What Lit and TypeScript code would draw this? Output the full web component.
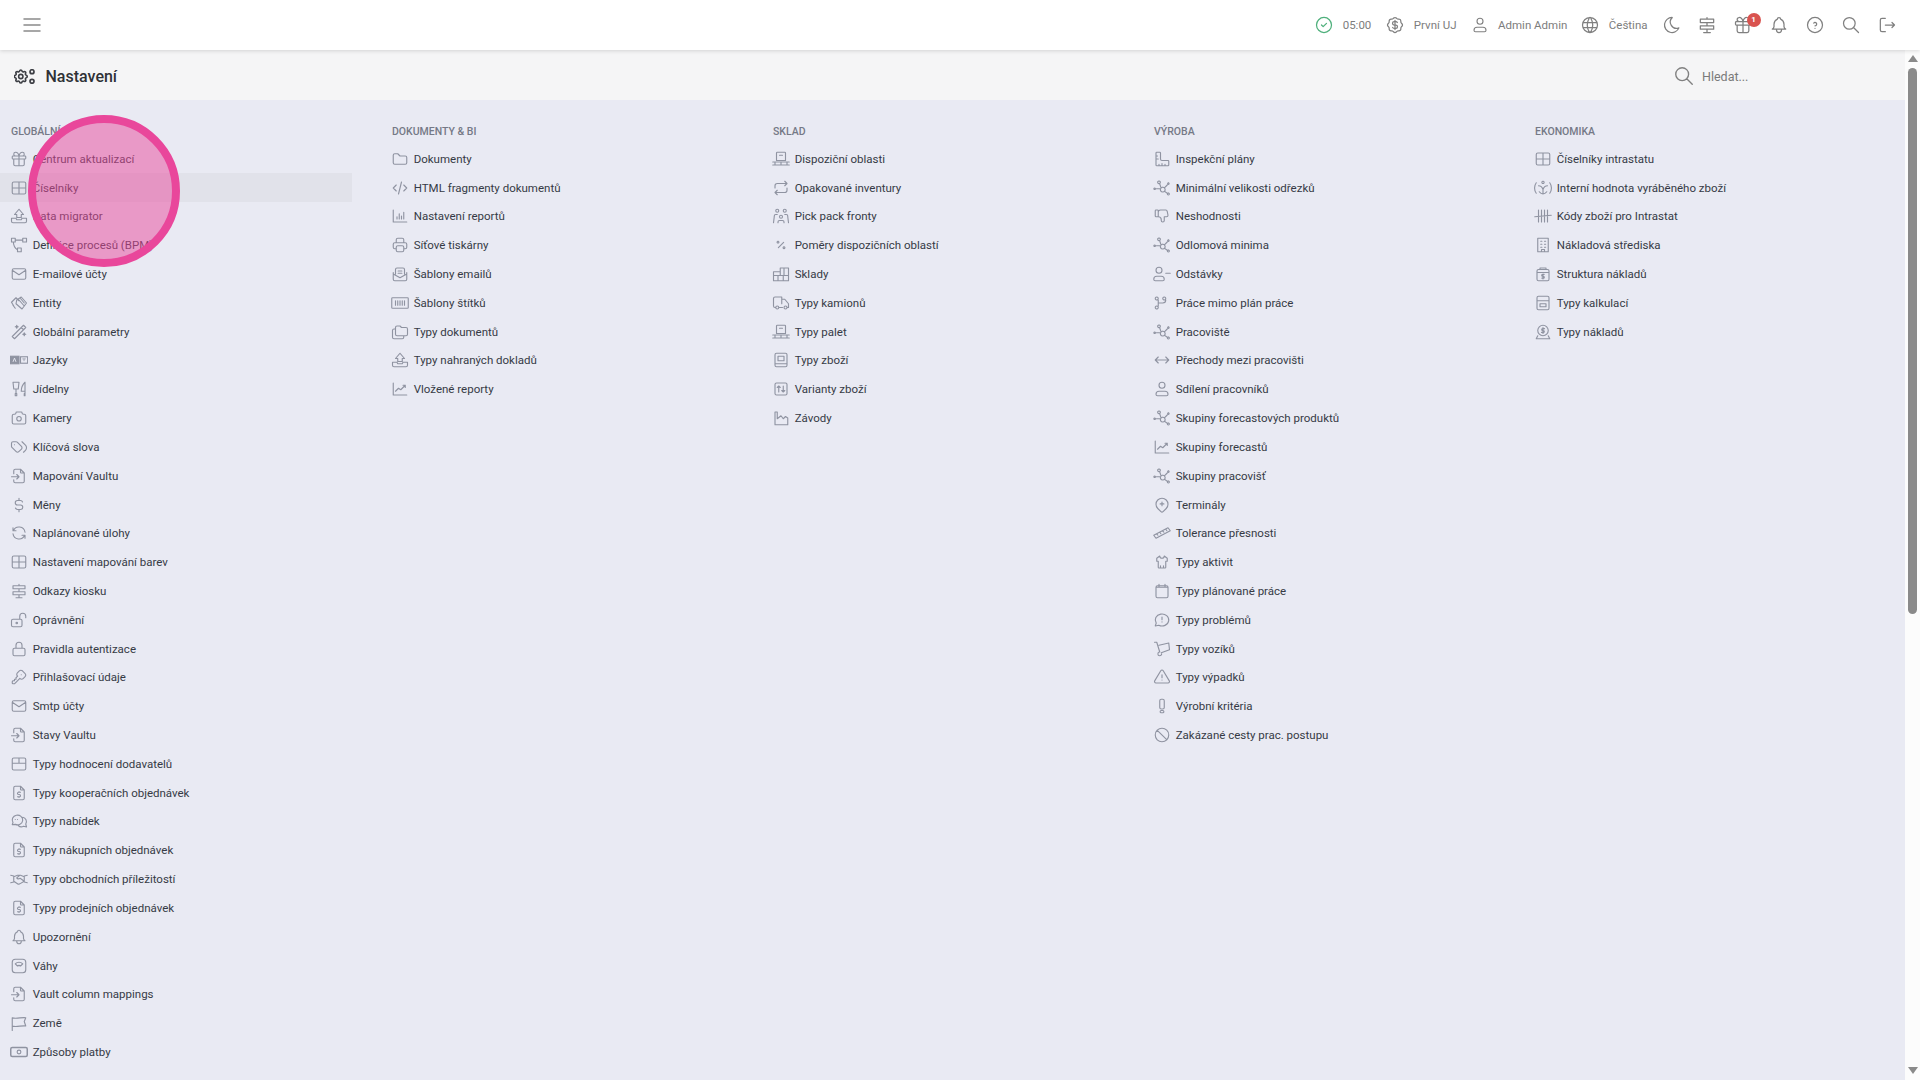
import { LitElement, html, css, svg } from "lit";
import { customElement } from "lit/decorators.js";

const P: Record<string, string> = {
  gift: "M3 9a1 1 0 0 1 1-1h16a1 1 0 0 1 1 1v2a1 1 0 0 1-1 1H4a1 1 0 0 1-1-1z M12 8v13 M19 12v7a2 2 0 0 1-2 2H7a2 2 0 0 1-2-2v-7 M7.500 8a2.500 2.500 0 0 1 0-5a4.800 8 0 0 1 4.500 5a4.800 8 0 0 1 4.500-5a2.500 2.500 0 0 1 0 5",
  table: "M3 6a2 2 0 0 1 2-2h14a2 2 0 0 1 2 2v12a2 2 0 0 1-2 2H5a2 2 0 0 1-2-2z M3 12h18 M12 4v16",
  upload: "M2 15v4a2 2 0 0 0 2 2h16a2 2 0 0 0 2-2v-4h-6l-1 2H9l-1-2z M6 10l6-7 6 7h-3v4H9v-4z",
  process: "M2 3h5v5H2z M17 3h5v5h-5z M10 16h5v5h-5z M7 5.500h10 M4.500 8c0 6 2 8 5.500 10.500",
  mail: "M3 7a2 2 0 0 1 2-2h14a2 2 0 0 1 2 2v10a2 2 0 0 1-2 2H5a2 2 0 0 1-2-2z M3 7l9 6l9-6",
  entity: "M2 11l6-6 4 4 M5 16l-3-5 M7 19L4 15 M9 8l6-4 7 8-6 8-8-7z M12 8l7 8 M14 6l5 6",
  wand: "M6 21L21 6l-3-3L3 18z M15 6l3 3 M9 3a2 2 0 0 0 2 2a2 2 0 0 0-2 2a2 2 0 0 0-2-2a2 2 0 0 0 2-2 M19 13a2 2 0 0 0 2 2a2 2 0 0 0-2 2a2 2 0 0 0-2-2a2 2 0 0 0 2-2",
  kitchen: "M4 3h8l-1 9H5z M7 18h2v3H7z M20 3v12h-5c0-3.700.2-7.400 5-12z M20 15v6h-1v-3 M8 12v6",
  camera: "M5 7h1a2 2 0 0 0 2-2a1 1 0 0 1 1-1h6a1 1 0 0 1 1 1a2 2 0 0 0 2 2h1a2 2 0 0 1 2 2v9a2 2 0 0 1-2 2H5a2 2 0 0 1-2-2V9a2 2 0 0 1 2-2 M9 13a3 3 0 1 0 6 0a3 3 0 0 0-6 0",
  tags: "M2 7v4.200a2 2 0 0 0 .6 1.400l5.700 5.700a2.400 2.400 0 0 0 3.400 0l3.600-3.600a2.400 2.400 0 0 0 0-3.400L9.600 5.600A2 2 0 0 0 8.200 5H4a2 2 0 0 0-2 2z M18 19l2.600-2.600a4.800 4.800 0 0 0 0-6.800L16 5 M6 9h-.01",
  fileimp: "M14 3v4a1 1 0 0 0 1 1h4 M5 9V5a2 2 0 0 1 2-2h7l5 5v11a2 2 0 0 1-2 2H7a2 2 0 0 1-2-2v-2 M2 13h10 M9 10l3 3-3 3",
  dollar: "M16.700 8A3 3 0 0 0 14 6h-4a3 3 0 0 0 0 6h4a3 3 0 0 1 0 6h-4a3 3 0 0 1-2.700-2 M12 3v3 M12 18v3",
  refresh: "M20 11A8.100 8.100 0 0 0 4.500 9M4 5v4h4 M4 13a8.100 8.100 0 0 0 15.500 2M20 19v-4h-4",
  sign: "M12 21v-4 M12 13V9 M12 5V3 M8 21h8 M4 5h16v4H4z M4 13h16v4H4z",
  lockopen: "M2 13a2 2 0 0 1 2-2h10a2 2 0 0 1 2 2v6a2 2 0 0 1-2 2H4a2 2 0 0 1-2-2z M8 16a1 1 0 1 0 2 0a1 1 0 0 0-2 0 M13 11V7a4 4 0 1 1 8 0v2",
  lock: "M4 13a2 2 0 0 1 2-2h12a2 2 0 0 1 2 2v6a2 2 0 0 1-2 2H6a2 2 0 0 1-2-2z M8 11V7a4 4 0 1 1 8 0v4",
  key: "M16.555 3.843l3.602 3.602a2.877 2.877 0 0 1 0 4.069l-2.643 2.643a2.877 2.877 0 0 1-4.069 0l-.301-.301-6.558 6.558a2 2 0 0 1-1.239.578l-.175.008H4.000a1 1 0 0 1-.993-.883L3 20.002v-1.172a2 2 0 0 1 .467-1.284l.119-.13.414-.414h2v-2h2v-2l2.144-2.144-.301-.301a2.877 2.877 0 0 1 0-4.069l2.643-2.643a2.877 2.877 0 0 1 4.069 0z M15 9h.01",
  rating: "M3 6a2 2 0 0 1 2-2h14a2 2 0 0 1 2 2v12a2 2 0 0 1-2 2H5a2 2 0 0 1-2-2z M3 11h18 M12 4v7",
  filed: "M14 3v4a1 1 0 0 0 1 1h4 M17 21H7a2 2 0 0 1-2-2V5a2 2 0 0 1 2-2h7l5 5v11a2 2 0 0 1-2 2z M14 11h-2.500a1.500 1.500 0 0 0 0 3h1a1.500 1.500 0 0 1 0 3H10 M12 17v1 M12 10v1",
  bubbles: "M3 17l1-3a7 6.500 0 1 1 3 2.500z M17 7a6 6 0 0 1 4 9l1 4-4-1a6 6 0 0 1-7-1 M7 10h.01 M10 10h.01",
  shake: "M1 7l4 1v8l-4 1 M23 7l-4 1v8l4 1 M5 9l5-2h4l5 2 M5 15l6 4 2-.5 6-3.500 M13 7l-4 3.500c1 2 3 1.500 4.500.5l5.500 4",
  bell: "M10 5a2 2 0 1 1 4 0a7 7 0 0 1 4 6v3a4 4 0 0 0 2 3H4a4 4 0 0 0 2-3v-3a7 7 0 0 1 4-6 M9 17v1a3 3 0 0 0 6 0v-1",
  scale: "M3 7a4 4 0 0 1 4-4h10a4 4 0 0 1 4 4v10a4 4 0 0 1-4 4H7a4 4 0 0 1-4-4z M12 7c2 0 3.700.8 5 2.100L14 12a3 3 0 0 0-2-.8a3 3 0 0 0-2 .8L7 9.100A7 7 0 0 1 12 7z",
  flag: "M3 22V5 M3 5c5 2 13-1 18 0l-2 5 2 6c-5-1-13 2-18 0",
  folder: "M5 5h4l3 3h7a2 2 0 0 1 2 2v7a2 2 0 0 1-2 2H5a2 2 0 0 1-2-2V7a2 2 0 0 1 2-2",
  code: "M7 8l-4 4 4 4 M17 8l4 4-4 4 M14 4l-4 16",
  bars: "M3 4v16h18 M8 16v-3 M11 16V9 M14 16v-4 M17 16V7",
  printer: "M17 17h2a2 2 0 0 0 2-2v-4a2 2 0 0 0-2-2H5a2 2 0 0 0-2 2v4a2 2 0 0 0 2 2h2 M17 9V5a2 2 0 0 0-2-2H9a2 2 0 0 0-2 2v4 M7 15a2 2 0 0 1 2-2h6a2 2 0 0 1 2 2v4a2 2 0 0 1-2 2H9a2 2 0 0 1-2-2z",
  mailopen: "M3 10v9a2 2 0 0 0 2 2h14a2 2 0 0 0 2-2v-9 M3 12l9 5 9-5 M6 12V6a2 2 0 0 1 2-2h8a2 2 0 0 1 2 2v6 M9.500 8h5 M9.500 11h5",
  barcode: "M1 6a1 1 0 0 1 1-1h20a1 1 0 0 1 1 1v12a1 1 0 0 1-1 1H2a1 1 0 0 1-1-1z M6 9v6 M9 9v6 M12 9v6 M15 9v6 M18 9v6",
  folders: "M8 4h4l2 2h6a2 2 0 0 1 2 2v7a2 2 0 0 1-2 2H8a2 2 0 0 1-2-2V6a2 2 0 0 1 2-2 M17 17v2a2 2 0 0 1-2 2H4a2 2 0 0 1-2-2V10a2 2 0 0 1 2-2h2",
  line: "M3 4v16h18 M6 15l4-4 3 2 6-6 M16 7h3v3",
  pallet: "M7 3h10a1 1 0 0 1 1 1v10H6V4a1 1 0 0 1 1-1z M10 7h4 M1 16h22 M1 20h22 M4 16v4 M12 16v4 M20 16v4",
  repeat: "M4 12V9a3 3 0 0 1 3-3h13 M17 3l3 3-3 3 M20 12v3a3 3 0 0 1-3 3H4 M7 21l-3-3 3-3",
  users: "M10 13a2 2 0 1 0 4 0a2 2 0 0 0-4 0 M8 21v-1a2 2 0 0 1 2-2h4a2 2 0 0 1 2 2v1 M15 5a2 2 0 1 0 4 0a2 2 0 0 0-4 0 M17 10h2a2 2 0 0 1 2 2v1 M5 5a2 2 0 1 0 4 0a2 2 0 0 0-4 0 M3 13v-1a2 2 0 0 1 2-2h2 M3 13l-1 8 M21 13l1 8",
  percent: "M16 14.500a1.200 1.200 0 1 0 .01 0 M8 7a1.200 1.200 0 1 0 .01 0 M8.500 15.500l7-7",
  warehouse: "M2 21V9h9V4h11v17z M2 14h20 M8 14v7 M15 14v7 M16 4v10 M11 9v5",
  truck: "M5 18H4a2 2 0 0 1-2-2V6a2 2 0 0 1 2-2h9v9 M13 7h4l5 6v5h-2 M14 18h-5 M5 18a2 2 0 1 0 4 0a2 2 0 0 0-4 0 M16 18a2 2 0 1 0 4 0a2 2 0 0 0-4 0",
  book: "M4 5a2 2 0 0 1 2-2h12a2 2 0 0 1 2 2v14a2 2 0 0 1-2 2H6a2 2 0 0 1-2-2z M4 17h16 M8 7h8v6H8z",
  variant: "M4 6a2 2 0 0 1 2-2h12a2 2 0 0 1 2 2v12a2 2 0 0 1-2 2H6a2 2 0 0 1-2-2z M9 16V8 M7 10l2-2 2 2 M15 8v8 M13 14l2 2 2-2",
  factory: "M4 21V4h3v9l5-4 3 4 3-3 3 2v9z",
  ruler: "M4 4v16a1 1 0 0 0 1 1h15a1 1 0 0 0 1-1v-5a1 1 0 0 0-1-1h-8a2 2 0 0 1-2-2V4a1 1 0 0 0-1-1H5a1 1 0 0 0-1 1z M4 8h2 M4 12h3 M8 21v-2 M12 21v-3 M16 21v-2",
  graph: "M2.200 12a1 1 0 1 0 .01 0 M4.500 13h4.500 M8 2.600a1.800 1.800 0 1 0 .01 0 M13 11a3.200 3.200 0 1 0 .01 0 M8.800 6l1.800 5.500 M15.500 11.500l3.500-3.500 M20.500 5.200a1 1 0 1 0 .01 0 M15.500 16.500l3.500 2.500 M20.500 18.800a1.300 1.300 0 1 0 .01 0",
  thumb: "M7 13V5a1 1 0 0 0-1-1H4a1 1 0 0 0-1 1v7a1 1 0 0 0 1 1h3a4 4 0 0 1 4 4v1a2 2 0 0 0 4 0v-5h3a2 2 0 0 0 2-2l-1-5a2 3 0 0 0-2-2h-7a3 3 0 0 0-3 3",
  userminus: "M4 7a4 4 0 1 0 8 0a4 4 0 0 0-8 0 M1 19a4 4 0 0 1 4-4h6a4 4 0 0 1 4 4a2 2 0 0 1-2 2H3a2 2 0 0 1-2-2z M17 11h6",
  user: "M8 7a4 4 0 1 0 8 0a4 4 0 0 0-8 0 M4 19a4 4 0 0 1 4-4h8a4 4 0 0 1 4 4a2 2 0 0 1-2 2H6a2 2 0 0 1-2-2z",
  fork: "M7 18a2 2 0 1 0 0 .01 M7 6a2 2 0 1 0 0 .01 M17 6a2 2 0 1 0 0 .01 M7 8v8 M17 8a4 4 0 0 1-4 4H7",
  arrows: "M3 12h18 M7 8l-4 4 4 4 M17 8l4 4-4 4",
  pin: "M17.657 16.657l-4.243 4.243a2 2 0 0 1-2.827 0l-4.244-4.243a8 8 0 1 1 11.314 0z M12 8v5 M9.500 10.500h5",
  ruler2: "M20 5l3 4-19 10-3-4z M17 7l1.500 2 M13 9l1.500 2 M9 11l1.500 2 M5 13l1.500 2",
  shirt: "M15 4l4 3v4h-2v8a1 1 0 0 1-1 1H8a1 1 0 0 1-1-1v-8H5V7l4-3a3 3 0 0 0 6 0z M10 20v-3 M14 20v-3",
  cal: "M4 7a2 2 0 0 1 2-2h12a2 2 0 0 1 2 2v12a2 2 0 0 1-2 2H6a2 2 0 0 1-2-2z M8 3v4 M16 3v4 M4 7h16",
  chat: "M3 20l1.300-3.900a9 8 0 1 1 3.400 2.900z M12 8v3.500 M12 14.500v.01",
  cart: "M2 3h3l4 13 M9 16a2.500 2.500 0 1 0 2.500 2.500 M8 7l13-3 1 9-11 4",
  alert: "M12 9v4 M10.363 3.591l-8.106 13.534a1.914 1.914 0 0 0 1.636 2.871h16.214a1.914 1.914 0 0 0 1.636-2.870l-8.106-13.536a1.914 1.914 0 0 0-3.274 0z M12 16h.01",
  crit: "M9 5a2 2 0 0 1 2-2h2a2 2 0 0 1 2 2v9a2 2 0 0 1-2 2h-2a2 2 0 0 1-2-2z M9.500 19.500a1.500 1.500 0 0 1 1.500-1.500h2a1.500 1.500 0 0 1 0 3h-2a1.500 1.500 0 0 1-1.500-1.500z",
  ban: "M3 12a9 9 0 1 0 18 0a9 9 0 1 0-18 0 M5.700 5.700l12.600 12.600",
  value: "M3 5c-3 4-3 10 0 14 M21 5c3 4 3 10 0 14 M12 3a1.500 1.500 0 1 0 .01 0 M6 9c3 0 5 2 6 5 M18 9c-3 0-5 2-6 5 M12 14v6 M7 17c1.500 2 3 3 5 3s3.500-1 5-3",
  tally: "M1 13l22-2 M6 4v16 M10 4v16 M14 4v16 M18 4v16",
  building: "M5 3h14v18H5z M9 7h1.500 M14 7h1.500 M9 11h1.500 M14 11h1.500 M9 15h1.500 M14 15h1.500 M10 21v-3h4v3",
  costs: "M4 8a2 2 0 0 1 2-2h12a2 2 0 0 1 2 2v11a2 2 0 0 1-2 2H6a2 2 0 0 1-2-2z M8 6V4h8v2 M4 10h16 M13.500 12.500h-2a1 1 0 0 0 0 2.500h1a1 1 0 0 1 0 2.500h-2 M12 12v6.500",
  calc: "M4 5a2 2 0 0 1 2-2h12a2 2 0 0 1 2 2v14a2 2 0 0 1-2 2H6a2 2 0 0 1-2-2z M4 9h16 M8 13h8v4H8z",
  coin: "M5 10a7 7 0 1 0 14 0a7 7 0 1 0-14 0 M14 7.500h-2.500a1.200 1.200 0 0 0 0 2.500h1a1.200 1.200 0 0 1 0 2.500H10 M12 6v8 M5 17l-2 4h18l-2-4",
  check: "M3 12a9 9 0 1 0 18 0a9 9 0 1 0-18 0 M9 12l2 2 4-4",
  rosette: "M5 7.200A2.200 2.200 0 0 1 7.200 5h1a2.200 2.200 0 0 0 1.550-.64l.7-.7a2.200 2.200 0 0 1 3.120 0l.7.7c.412.41.97.64 1.550.64h1A2.200 2.200 0 0 1 19 7.200v1c0 .58.23 1.138.64 1.550l.7.7a2.200 2.200 0 0 1 0 3.120l-.7.7a2.200 2.200 0 0 0-.64 1.550v1a2.200 2.200 0 0 1-2.200 2.200h-1a2.200 2.200 0 0 0-1.550.64l-.7.7a2.200 2.200 0 0 1-3.120 0l-.7-.7a2.200 2.200 0 0 0-1.550-.64h-1A2.200 2.200 0 0 1 5 16.800v-1a2.200 2.200 0 0 0-.64-1.550l-.7-.7a2.200 2.200 0 0 1 0-3.120l.7-.7A2.200 2.200 0 0 0 5 8.200v-1 M14.800 9a2 2 0 0 0-1.800-1h-2a2 2 0 1 0 0 4h2a2 2 0 1 1 0 4h-2a2 2 0 0 1-1.800-1 M12 6.500v11",
  world: "M3 12a9 9 0 1 0 18 0a9 9 0 0 0-18 0 M3.600 9h16.800 M3.600 15h16.800 M11.500 3a17 17 0 0 0 0 18 M12.500 3a17 17 0 0 1 0 18",
  moon: "M12 3h.393a7.500 7.500 0 0 0 7.920 12.446a9 9 0 1 1-8.313-12.454z",
  help: "M3 12a9 9 0 1 0 18 0a9 9 0 1 0-18 0 M12 16v.01 M12 13a2 2 0 0 0 .914-3.782a1.980 1.980 0 0 0-2.414.483",
  search: "M3 10a7 7 0 1 0 14 0a7 7 0 1 0-14 0 M21 21l-6-6",
  logout: "M10 4H6a2 2 0 0 0-2 2v12a2 2 0 0 0 2 2h4 M10 12h11 M18 9l3 3-3 3",
  menu: "M4 6h16 M4 12h16 M4 18h16",
  gear: "M10.325 4.317c.426-1.756 2.924-1.756 3.350 0a1.724 1.724 0 0 0 2.573 1.066c1.543-.94 3.310.826 2.370 2.370a1.724 1.724 0 0 0 1.065 2.572c1.756.426 1.756 2.924 0 3.350a1.724 1.724 0 0 0-1.066 2.573c.94 1.543-.826 3.310-2.370 2.370a1.724 1.724 0 0 0-2.572 1.065c-.426 1.756-2.924 1.756-3.350 0a1.724 1.724 0 0 0-2.573-1.066c-1.543.94-3.310-.826-2.370-2.370a1.724 1.724 0 0 0-1.065-2.572c-1.756-.426-1.756-2.924 0-3.350a1.724 1.724 0 0 0 1.066-2.573c-.94-1.543.826-3.310 2.370-2.370c1 .608 2.296.07 2.572-1.065z M9 12a3 3 0 1 0 6 0a3 3 0 0 0-6 0",
};

const icon = (name: string, cls = "") => html`<svg class="ic ${cls}" viewBox="0 0 24 24" fill="none" stroke="currentColor" stroke-width="1.500" stroke-linecap="round" stroke-linejoin="round"><path d=${P[name]}></path></svg>`;

const jazyky = html`<svg class="ic" viewBox="0 0 24 24" fill="none" stroke="currentColor" stroke-width="1.500">${svg`<rect x="0" y="7" width="12" height="10" fill="currentColor"></rect><path d="M6 9.500l-2 5M6 9.500l2 5" stroke="#e9eaf3" stroke-width="1.200"></path><rect x="14" y="7.700" width="9.500" height="8.600"></rect><path d="M16.500 10.500h4.500M18.700 10.500v3" stroke-width="1"></path>`}</svg>`;
const cash = html`<svg class="ic" viewBox="0 0 24 24" fill="none" stroke="currentColor" stroke-width="2">${svg`<rect x="1" y="6" width="22" height="12" rx="2"></rect><circle cx="12" cy="12" r="2.500" stroke-width="1.500"></circle>`}</svg>`;
const cog = html`<svg class="cog" viewBox="0 0 21 15" fill="none" stroke="currentColor" stroke-linecap="round" stroke-linejoin="round">${svg`<g transform="translate(-1.840 -1.140) scale(.72)" stroke-width="2.200"><path d=${P.gear}></path></g><circle cx="18" cy="2.700" r="2" stroke-width="1.700"></circle><circle cx="18" cy="12.300" r="2" stroke-width="1.700"></circle>`}</svg>`;

type Item = [string, string];
const cols: { title: string; items: Item[] }[] = [
  { title: "GLOBÁLNÍ", items: [
    ["gift", "Centrum aktualizací"], ["table", "Číselníky"], ["upload", "Data migrator"], ["process", "Definice procesů (BPM)"],
    ["mail", "E-mailové účty"], ["entity", "Entity"], ["wand", "Globální parametry"], ["_lang", "Jazyky"],
    ["kitchen", "Jídelny"], ["camera", "Kamery"], ["tags", "Klíčová slova"], ["fileimp", "Mapování Vaultu"],
    ["dollar", "Měny"], ["refresh", "Naplánované úlohy"], ["table", "Nastavení mapování barev"], ["sign", "Odkazy kiosku"],
    ["lockopen", "Oprávnění"], ["lock", "Pravidla autentizace"], ["key", "Přihlašovací údaje"], ["mail", "Smtp účty"],
    ["fileimp", "Stavy Vaultu"], ["rating", "Typy hodnocení dodavatelů"], ["filed", "Typy kooperačních objednávek"], ["bubbles", "Typy nabídek"],
    ["filed", "Typy nákupních objednávek"], ["shake", "Typy obchodních příležitostí"], ["filed", "Typy prodejních objednávek"], ["bell", "Upozornění"],
    ["scale", "Váhy"], ["fileimp", "Vault column mappings"], ["flag", "Země"], ["_cash", "Způsoby platby"],
  ]},
  { title: "DOKUMENTY & BI", items: [
    ["folder", "Dokumenty"], ["code", "HTML fragmenty dokumentů"], ["bars", "Nastavení reportů"], ["printer", "Síťové tiskárny"],
    ["mailopen", "Šablony emailů"], ["barcode", "Šablony štítků"], ["folders", "Typy dokumentů"], ["upload", "Typy nahraných dokladů"], ["line", "Vložené reporty"],
  ]},
  { title: "SKLAD", items: [
    ["pallet", "Dispoziční oblasti"], ["repeat", "Opakované inventury"], ["users", "Pick pack fronty"], ["percent", "Poměry dispozičních oblastí"],
    ["warehouse", "Sklady"], ["truck", "Typy kamionů"], ["pallet", "Typy palet"], ["book", "Typy zboží"], ["variant", "Varianty zboží"], ["factory", "Závody"],
  ]},
  { title: "VÝROBA", items: [
    ["ruler", "Inspekční plány"], ["graph", "Minimální velikosti odřezků"], ["thumb", "Neshodnosti"], ["graph", "Odlomová minima"],
    ["userminus", "Odstávky"], ["fork", "Práce mimo plán práce"], ["graph", "Pracoviště"], ["arrows", "Přechody mezi pracovišti"],
    ["user", "Sdílení pracovníků"], ["graph", "Skupiny forecastových produktů"], ["line", "Skupiny forecastů"], ["graph", "Skupiny pracovišť"],
    ["pin", "Terminály"], ["ruler2", "Tolerance přesnosti"], ["shirt", "Typy aktivit"], ["cal", "Typy plánované práce"],
    ["chat", "Typy problémů"], ["cart", "Typy vozíků"], ["alert", "Typy výpadků"], ["crit", "Výrobní kritéria"], ["ban", "Zakázané cesty prac. postupu"],
  ]},
  { title: "EKONOMIKA", items: [
    ["table", "Číselníky intrastatu"], ["value", "Interní hodnota vyráběného zboží"], ["tally", "Kódy zboží pro Intrastat"], ["building", "Nákladová střediska"],
    ["costs", "Struktura nákladů"], ["calc", "Typy kalkulací"], ["coin", "Typy nákladů"],
  ]},
];

@customElement("app-root")
export class AppRoot extends LitElement {
  static styles = css`
    :host { display: block; width: 1920px; height: 1080px; overflow: hidden; position: relative; font-family: Roboto, "Liberation Sans", sans-serif; background: #e9eaf3; }
    .ic { width: 18px; height: 18px; flex: none; color: #8f93a1; display: block; }
    header { height: 50px; background: #fff; display: flex; align-items: center; padding: 0 15px 1px 20px; box-sizing: border-box; position: relative; z-index: 2; box-shadow: 0 1px 4px rgba(0,0,0,.14); }
    header .menu { width: 24px; height: 24px; color: #8a8a8a; }
    .right { margin-left: auto; display: flex; align-items: center; color: #7d7d7d; font-size: 11.500px; }
    .right .ic { color: #808080; width: 20px; height: 20px; }
    .right .ic.ok { color: #4fb07c; }
    .right .ic.small { width: 18px; height: 18px; margin: 0 1px; }
    .pair { display: flex; align-items: center; gap: 8.500px; margin-right: 13px; }
    .pair.clock { margin-right: 14px; }
    .btn { width: 36px; display: flex; justify-content: center; position: relative; }
    .btn.first { margin-left: -6.500px; margin-right: -1px; }
    .badge { position: absolute; top: -2px; left: 21.500px; width: 14px; height: 14px; border-radius: 50%; background: #d9534f; color: #fff; font-size: 8px; font-weight: 700; display: flex; align-items: center; justify-content: center; }
    .below { display: flex; height: 1030px; }
    .main { flex: 1; min-width: 0; }
    .title { height: 50px; background: #f5f5f6; display: flex; align-items: center; padding: 2px 0 0 14px; box-sizing: border-box; }
    .cog { width: 21px; height: 15px; color: #3d3f45; margin-right: 10.500px; flex: none; }
    h1 { margin: 0; font-size: 16px; font-weight: 500; color: #2f3136; }
    .find { margin-left: auto; display: flex; align-items: center; gap: 7px; width: 232px; font-size: 12.500px; color: #7a7a7a; }
    .find .ic { width: 22px; height: 22px; color: #808080; }
    .grid { display: grid; grid-template-columns: repeat(5, 352px); column-gap: 29px; padding-top: 22px; }
    h2 { margin: 0 0 3.400px; padding-left: 11px; font-size: 10.500px; line-height: 19px; font-weight: 500; color: #757986; }
    .row { height: 28.820px; display: flex; align-items: center; gap: 4.700px; padding-left: 10px; font-size: 11.500px; color: #363a45; white-space: nowrap; }
    .row.on { background: #e1e2ea; }
    .bar { width: 15px; background: #fcfcfc; display: flex; flex-direction: column; align-items: center; padding-top: 5px; box-sizing: border-box; }
    .up, .down { width: 0; height: 0; border-left: 5px solid transparent; border-right: 5px solid transparent; }
    .up { border-bottom: 7px solid #8a8a8a; }
    .down { border-top: 7px solid #8a8a8a; margin-top: auto; margin-bottom: 6px; }
    .thumb { width: 9px; height: 546px; margin-top: 6px; background: #8a8a8a; border-radius: 5px; }
    .spot { position: absolute; left: 27.500px; top: 115px; width: 152px; height: 152px; box-sizing: border-box; border-radius: 50%; border: 8px solid #e9479b; background: rgba(233, 71, 155, .5); z-index: 3; pointer-events: none; }
  `;

  render() {
    return html`
      <header>
        ${icon("menu", "menu")}
        <div class="right">
          <div class="pair clock">${icon("check", "ok")}<span>05:00</span></div>
          <div class="pair">${icon("rosette")}<span>První UJ</span></div>
          <div class="pair">${icon("user", "small")}<span>Admin Admin</span></div>
          <div class="pair">${icon("world")}<span>Čeština</span></div>
          <div class="btn first">${icon("moon")}</div>
          <div class="btn">${icon("sign")}</div>
          <div class="btn">${icon("gift")}<span class="badge">1</span></div>
          <div class="btn">${icon("bell")}</div>
          <div class="btn">${icon("help")}</div>
          <div class="btn">${icon("search")}</div>
          <div class="btn">${icon("logout")}</div>
        </div>
      </header>
      <div class="below">
        <div class="main">
          <div class="title">
            ${cog}
            <h1>Nastavení</h1>
            <div class="find">${icon("search")}<span>Hledat...</span></div>
          </div>
          <div class="grid">
            ${cols.map(c => html`<div>
              <h2>${c.title}</h2>
              ${c.items.map(([i, t]) => html`<div class="row ${t === "Číselníky" ? "on" : ""}">${i === "_lang" ? jazyky : i === "_cash" ? cash : icon(i)}<span>${t}</span></div>`)}
            </div>`)}
          </div>
        </div>
        <div class="bar"><div class="up"></div><div class="thumb"></div><div class="down"></div></div>
      </div>
      <div class="spot"></div>
    `;
  }
}
